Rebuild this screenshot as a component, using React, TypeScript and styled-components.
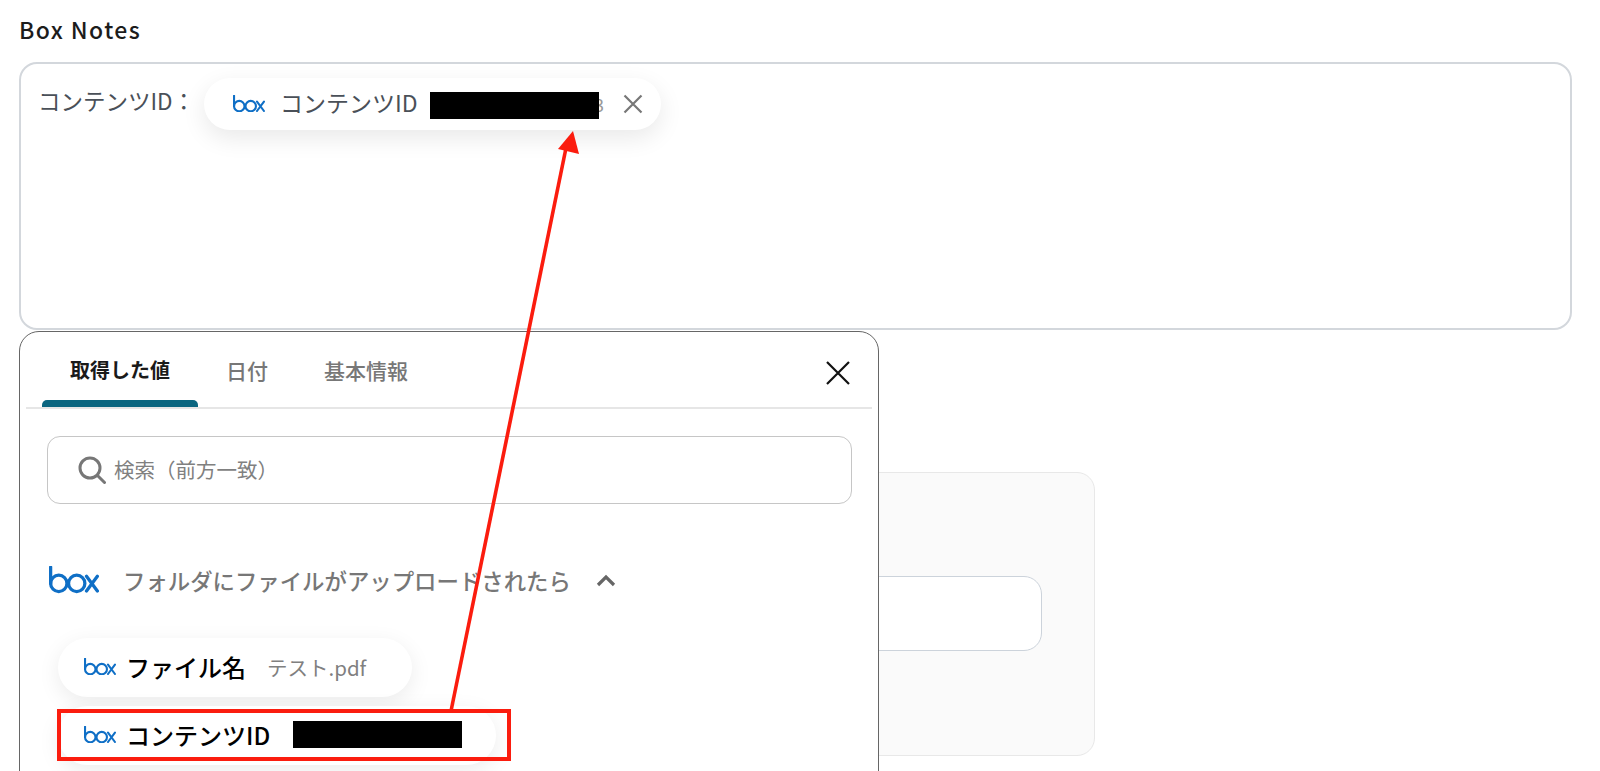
import React from 'react'
import styled, { createGlobalStyle } from 'styled-components'

const GlobalStyle = createGlobalStyle`
  html, body {
    margin: 0;
    padding: 0;
    background: #fff;
    overflow: hidden;
  }
  body {
    font-family: 'Noto Sans CJK JP', 'Noto Sans', sans-serif;
  }
`

const BoxLogo: React.FC<{ width: number }> = ({ width }) => (
  <svg width={width} viewBox="0 0 46 25" fill="none" stroke="#0f6fc6" strokeWidth="3" style={{ flexShrink: 0 }}>
    <path d="M1.5 1V16" strokeLinecap="round" />
    <circle cx="9" cy="16" r="7.5" />
    <circle cx="25.5" cy="16" r="7.5" />
    <path d="M34.5 9.5L44.5 23M44.5 9.5L34.5 23" strokeLinecap="round" />
  </svg>
)

const App: React.FC = () => (
  <Page>
    <GlobalStyle />
    <FieldLabel>Box Notes</FieldLabel>
    <TextArea>
      <Prefix>コンテンツID：</Prefix>
      <InsertedChip>
        <BoxLogo width={32} />
        <InsertedLabel>コンテンツID</InsertedLabel>
        <InsertedRedaction $width={169} $height={27} />
        <HiddenTail>3</HiddenTail>
        <svg width="20" height="20" viewBox="0 0 20 20" stroke="#777" strokeWidth="2.2" fill="none">
          <path d="M1.5 1.5L18.5 18.5M18.5 1.5L1.5 18.5" />
        </svg>
      </InsertedChip>
    </TextArea>

    <BackPanel>
      <BackInput />
    </BackPanel>

    <Popup>
      <TabBar>
        <Tab $active>取得した値</Tab>
        <Tab>日付</Tab>
        <Tab>基本情報</Tab>
        <CloseButton>
          <svg width="26" height="26" viewBox="0 0 26 26" stroke="#111" strokeWidth="2.2" fill="none">
            <path d="M2 2L24 24M24 2L2 24" />
          </svg>
        </CloseButton>
      </TabBar>

      <SearchBox>
        <svg width="28" height="28" viewBox="0 0 28 28" fill="none" stroke="#777" strokeWidth="3">
          <circle cx="12" cy="12" r="10" />
          <path d="M19.5 19.5L26.5 26.5" strokeLinecap="round" />
        </svg>
        <SearchText>検索（前方一致）</SearchText>
      </SearchBox>

      <SectionHeader>
        <BoxLogo width={50} />
        <SectionTitle>フォルダにファイルがアップロードされたら</SectionTitle>
        <svg width="20" height="13" viewBox="0 0 20 13" fill="none" stroke="#666" strokeWidth="3.2">
          <path d="M2 11L10 3L18 11" />
        </svg>
      </SectionHeader>

      <ValueList>
        <ValueChip $width={354}>
          <BoxLogo width={32} />
          <ValueName>ファイル名</ValueName>
          <ValueSample>テスト.pdf</ValueSample>
        </ValueChip>
        <ValueChip $width={438}>
          <BoxLogo width={32} />
          <ValueName>コンテンツID</ValueName>
          <SampleRedaction $width={169} $height={27} />
          <Highlight />
        </ValueChip>
      </ValueList>
    </Popup>

    <ArrowLayer viewBox="0 0 1600 771">
      <path d="M451 711L566 148" stroke="#fb1c0e" strokeWidth="3.6" fill="none" />
      <path d="M573 131L558 149L579 154Z" fill="#fb1c0e" />
    </ArrowLayer>
  </Page>
)

const Page = styled.div`
  position: relative;
  box-sizing: border-box;
  width: 1600px;
  height: 771px;
  padding: 15px 28px 0 19px;
  overflow: hidden;
`

const FieldLabel = styled.div`
  font-size: 23px;
  line-height: 28px;
  font-weight: 500;
  letter-spacing: 1.4px;
  color: #1c1c1c;
`

const TextArea = styled.div`
  box-sizing: border-box;
  display: flex;
  align-items: flex-start;
  height: 268px;
  margin-top: 19px;
  padding: 13.5px 17px;
  border: 2px solid #d3d7dc;
  border-radius: 18px;
  background: #fff;
`

const Prefix = styled.span`
  width: 166px;
  font-size: 22.5px;
  line-height: 48px;
  margin-top: -2px;
  color: #4a5058;
  white-space: nowrap;
`

const InsertedChip = styled.div`
  box-sizing: border-box;
  display: flex;
  align-items: center;
  width: 457px;
  height: 52px;
  padding-left: 29px;
  border-radius: 26px;
  background: #fff;
  box-shadow: 0 8px 24px rgba(0, 0, 0, 0.09);
`

const InsertedLabel = styled.span`
  width: 150px;
  margin-left: 15px;
  padding-bottom: 3px;
  font-size: 23px;
  color: #4a5058;
  white-space: nowrap;
`

const Redaction = styled.div<{ $width: number; $height: number }>`
  position: relative;
  z-index: 1;
  flex-shrink: 0;
  width: ${(p) => p.$width}px;
  height: ${(p) => p.$height}px;
  background: #000;
`

const InsertedRedaction = styled(Redaction)`
  margin-top: 3px;
`

const HiddenTail = styled.span`
  width: 29px;
  margin-left: -5px;
  font-size: 18px;
  color: #999;
`

const BackPanel = styled.div`
  box-sizing: border-box;
  height: 284px;
  width: 1076px;
  margin-top: 142px;
  padding: 103px 52px 0 0;
  border: 1.5px solid #e8e8e8;
  border-radius: 18px;
  background: #fafafa;
`

const BackInput = styled.div`
  box-sizing: border-box;
  height: 75px;
  margin-left: auto;
  width: 600px;
  border: 1.5px solid #ccd3db;
  border-radius: 18px;
  background: #fff;
`

const Popup = styled.div`
  position: absolute;
  left: 19px;
  top: 331px;
  box-sizing: border-box;
  width: 860px;
  height: 500px;
  padding: 0 6px;
  border: 1.5px solid #666;
  border-radius: 20px;
  background: #fff;
`

const TabBar = styled.div`
  display: flex;
  height: 75px;
  padding-left: 16px;
  border-bottom: 2px solid #e6e6e6;
`

const Tab = styled.div<{ $active?: boolean }>`
  position: relative;
  padding: 18px 28px 0;
  font-size: ${(p) => (p.$active ? 20 : 21)}px;
  line-height: 40px;
  font-weight: ${(p) => (p.$active ? 700 : 500)};
  color: ${(p) => (p.$active ? '#1a1a1a' : '#777')};
  white-space: nowrap;

  &::after {
    content: '';
    display: ${(p) => (p.$active ? 'block' : 'none')};
    position: absolute;
    left: 0;
    right: 0;
    bottom: 0;
    height: 7px;
    border-radius: 5px 5px 0 0;
    background: #0b6680;
  }
`

const CloseButton = styled.div`
  margin: 28px 21px 0 auto;
`

const SearchBox = styled.div`
  box-sizing: border-box;
  display: flex;
  align-items: center;
  width: 805px;
  height: 68px;
  margin: 27px 0 0 21px;
  padding-left: 30px;
  border: 1.5px solid #c6c6c6;
  border-radius: 13px;
`

const SearchText = styled.span`
  margin: -2px 0 0 8px;
  font-size: 20.5px;
  color: #808080;
`

const SectionHeader = styled.div`
  display: flex;
  align-items: center;
  height: 28px;
  margin: 62px 0 0 23px;

  svg:last-child {
    margin-left: 25px;
  }
`

const SectionTitle = styled.span`
  margin-left: 24px;
  font-size: 22.4px;
  font-weight: 500;
  color: #777;
  white-space: nowrap;
`

const ValueList = styled.div`
  display: flex;
  flex-direction: column;
  gap: 9px;
  margin: 44px 0 0 32px;
`

const ValueChip = styled.div<{ $width: number }>`
  position: relative;
  box-sizing: border-box;
  display: flex;
  align-items: center;
  width: ${(p) => p.$width}px;
  height: 59px;
  padding: 0 0 2px 26px;
  border-radius: 30px;
  background: #fff;
  box-shadow: 0 6px 22px rgba(0, 0, 0, 0.08);
`

const ValueName = styled.span`
  margin-left: 10px;
  font-size: 24px;
  font-weight: 500;
  color: #000;
  white-space: nowrap;
`

const ValueSample = styled.span`
  margin-left: 21px;
  font-size: 20.5px;
  color: #808080;
  white-space: nowrap;
`

const SampleRedaction = styled(Redaction)`
  margin-left: 23px;
`

const Highlight = styled.div`
  position: absolute;
  left: -1px;
  top: 3px;
  width: 454px;
  height: 52px;
  box-sizing: border-box;
  border: 4px solid #fb1c0e;
`

const ArrowLayer = styled.svg`
  position: absolute;
  left: 0;
  top: 0;
  width: 1600px;
  height: 771px;
  pointer-events: none;
`

export default App
